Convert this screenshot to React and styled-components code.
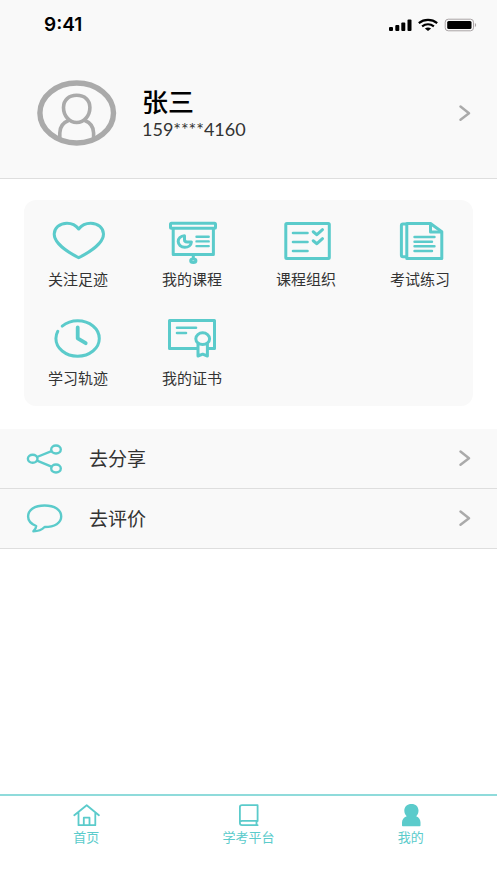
import React from 'react'
import styled, { createGlobalStyle } from 'styled-components'

const TEAL = '#5bcbcb'
const GREY = '#aaaaaa'

const GlobalStyle = createGlobalStyle`
  * {
    box-sizing: border-box;
  }
  body {
    margin: 0;
    background: #fff;
    color: #333;
    font-family: "Noto Sans CJK SC", sans-serif;
  }
  a {
    color: inherit;
    text-decoration: none;
  }
  svg {
    display: block;
    flex: none;
  }
`

const Page = styled.div`
  min-height: 100vh;
  display: flex;
  flex-direction: column;
`

const Header = styled.header`
  background: #f9f9f9;
  border-bottom: 1px solid #dedede;
`

const StatusBar = styled.div`
  height: 50px;
  padding: 0 20px 0 44px;
  display: flex;
  align-items: center;
  justify-content: space-between;
`

const Time = styled.span`
  font-family: Inter, sans-serif;
  font-size: 19px;
  font-weight: 600;
  line-height: 28px;
  color: #000;
`

const Indicators = styled.div`
  display: flex;
  align-items: center;
  gap: 6px;
`

const Profile = styled.a`
  display: flex;
  align-items: center;
  padding: 30px 26px 32px 37px;
`

const ProfileText = styled.div`
  flex: 1;
  margin-left: 25px;
  padding-top: 2px;
`

const Name = styled.div`
  font-size: 26px;
  font-weight: 500;
  line-height: 30px;
  color: #000;
`

const Phone = styled.div`
  font-family: Lato, sans-serif;
  font-size: 18px;
  line-height: 26px;
`

const Main = styled.main`
  flex: 1;
`

const Card = styled.nav`
  margin: 21px 24px 23px;
  padding: 20px 21px 17px 22px;
  display: grid;
  grid-template-columns: repeat(4, 64px);
  justify-content: space-between;
  row-gap: 29px;
  background: #f9f9f9;
  border-radius: 12px;
`

const CardItem = styled.a`
  display: flex;
  flex-direction: column;
  align-items: center;
  gap: 4px;
  font-size: 15px;
  line-height: 22px;
  white-space: nowrap;
`

const Row = styled.a`
  height: 60px;
  padding: 0 26px 1px;
  display: flex;
  align-items: center;
  background: #f9f9f9;
  border-bottom: 1px solid #dedede;
`

const RowLabel = styled.span`
  flex: 1;
  margin-left: 25px;
  font-size: 19px;
  line-height: 28px;
`

const TabBar = styled.nav`
  height: 89px;
  padding: 7px 5px 0;
  display: flex;
  background: #fff;
  border-top: 2px solid #8fdbdb;
`

const Tab = styled.a`
  flex: 1;
  display: flex;
  flex-direction: column;
  align-items: center;
  gap: 2px;
  font-size: 13px;
  line-height: 16px;
  && {
    color: ${TEAL};
  }
`

const LineIcon = styled.svg.attrs({ 'aria-hidden': true })`
  fill: none;
  stroke: ${({ $color }) => $color || TEAL};
  stroke-width: ${({ $weight }) => $weight || 3};
  stroke-linecap: round;
  stroke-linejoin: round;
`

const CardIcon = ({ children }) => (
  <LineIcon width="56" height="44" viewBox="0 0 56 44">
    {children}
  </LineIcon>
)

const RowIcon = ({ children }) => (
  <LineIcon width="38" height="31" viewBox="0 0 38 31" $weight={2.4}>
    {children}
  </LineIcon>
)

const TabIcon = ({ children }) => (
  <LineIcon width="28" height="24" viewBox="0 0 28 24" $weight={1.8}>
    {children}
  </LineIcon>
)

const Chevron = () => (
  <LineIcon width="12" height="18" viewBox="0 0 12 18" $color={GREY} $weight={2.4}>
    <path d="M1.5 2.5 10 9.2l-8.500 6.600" />
  </LineIcon>
)

const Avatar = () => (
  <LineIcon width="80" height="66" viewBox="0 0 80 66" $color={GREY} $weight={3.6}>
    <ellipse cx="39.7" cy="33" rx="36.8" ry="30" strokeWidth="5.4" />
    <path d="M39.7 15.300c-7.800 0-13.200 4.600-13.200 12.200 0 8 5.600 15 13.200 15s13.200-7 13.200-15c0-7.600-5.400-12.200-13.200-12.200z" />
    <path d="M31.500 40.500c-5.500 2.200-8.700 6.500-8.700 12.500v5M47.900 40.500c5.500 2.200 8.700 6.500 8.700 12.500v5" />
  </LineIcon>
)

const Signal = () => (
  <svg width="24" height="14" viewBox="0 0 24 14" aria-hidden="true">
    <rect x="1" y="9" width="4" height="4" rx="1" />
    <rect x="7.3" y="7" width="4" height="6" rx="1" />
    <rect x="13.3" y="4.5" width="4" height="8.5" rx="1" />
    <rect x="19.5" y="1.5" width="4" height="11.5" rx="1" />
  </svg>
)

const Wifi = () => (
  <svg width="20" height="14" viewBox="0 0 20 14" fill="none" stroke="#000" aria-hidden="true">
    <path strokeWidth="2.2" d="M.8 5.100C6.200.9 13.800.9 19.200 5.100" />
    <path strokeWidth="2.2" d="M4.100 8.300c3.500-2.600 8.300-2.600 11.800 0" />
    <path fill="#000" stroke="none" d="M6.900 10.500c1.800-1.300 4.400-1.300 6.200 0L10 13z" />
  </svg>
)

const Battery = () => (
  <svg width="33" height="14" viewBox="0 0 33 14" aria-hidden="true">
    <rect x="1.2" y="1.2" width="28.3" height="11.6" rx="3" fill="none" stroke="#aaa4a6" />
    <rect x="3.2" y="3" width="24.3" height="8" rx="1.5" />
    <path fill="#aaa4a6" d="M30.900 5c1.600.5 1.600 3.500 0 4z" />
  </svg>
)

const menu = [
  {
    label: '关注足迹',
    icon: (
      <path d="M28.700 9C25.500 4.800 21.500 3.200 17 3.200 9.500 3.200 4.200 8.200 4.200 14c0 8.500 12 17.500 24.500 23.700C41.200 31.500 53.500 22.500 53.500 14c0-5.800-5.300-10.800-12.800-10.800-4.700 0-8.800 1.600-12 5.800z" />
    ),
  },
  {
    label: '我的课程',
    icon: (
      <>
        <rect x="6.500" y="3.300" width="45" height="5" rx="1" />
        <path d="M9.200 9v25.500h40.200V9" />
        <path d="M29.300 35v3" />
        <ellipse cx="29.300" cy="40.700" rx="2.600" ry="1.800" />
        <path d="M20.500 15.800c-4 .2-6.300 2.700-6.300 5.700 0 3.200 2.800 5.800 6.600 5.800 3.600 0 6.400-2.100 6.600-5.300h-4.200c-1.600 0-2.700-.9-2.700-2.300z" />
        <path strokeWidth="2.4" d="M32.500 16.700h12.200M32.500 21.400h12.200M32.500 26.100h12.200" />
      </>
    ),
  },
  {
    label: '课程组织',
    icon: (
      <>
        <rect x="7.800" y="3.500" width="43.500" height="35" rx="1" />
        <path strokeWidth="2.6" d="M15 13h14.500M15 22h14.500M15 31h14.500" />
        <path d="m35.200 11.800 3.700 2.900 5.600-5M35.200 20.800l3.700 2.900 5.600-5" />
      </>
    ),
  },
  {
    label: '考试练习',
    icon: (
      <>
        <path d="M38.500 3.500H14.800v35h35V11.800z" />
        <path d="M14 4h-3c-1 0-1.600.7-1.600 1.500v29.700c0 .8.600 1.500 1.600 1.500h3M38.500 4v8h11" />
        <path strokeWidth="2.4" d="M22.500 17h20M22.500 21.700H40M22.500 26.300h20M22.500 31H40" />
      </>
    ),
  },
  {
    label: '学习轨迹',
    icon: (
      <>
        <path d="M12.200 7.100C16.500 3.700 21.800 1.800 27.600 1.800c12.100 0 21.700 7.900 21.700 17.700s-9.600 17.700-21.700 17.700S5.900 29.300 5.900 19.500c0-2.700.7-5 1.900-7.200" />
        <path strokeWidth="3.8" d="M27.700 8.500v10.800l8 4.900" />
      </>
    ),
  },
  {
    label: '我的证书',
    icon: (
      <>
        <path d="M33.500 29.500h-28v-28h45v28h-6" />
        <path strokeWidth="2.6" d="M13 8.700h19M13 14h9" />
        <ellipse cx="38.700" cy="19.700" rx="6.900" ry="5.900" />
        <path d="M34 25v12l4.700-1.800 4.700 1.800V25" />
      </>
    ),
  },
]

const actions = [
  {
    label: '去分享',
    icon: (
      <>
        <ellipse cx="6.700" cy="15.800" rx="4.800" ry="4" />
        <ellipse cx="30" cy="6.500" rx="4.800" ry="4" />
        <ellipse cx="30" cy="25.500" rx="4.800" ry="4" />
        <path d="m11 14 14.500-5.800M11 17.700l14.500 6" />
      </>
    ),
  },
  {
    label: '去评价',
    icon: (
      <path d="M10.200 23C5 21 2.100 17.700 2.100 13.500 2.100 7 8.500 2.500 18.600 2.500s16.600 4.500 16.600 11S28.700 24 18.600 24c-2.600 2.600-6.600 4.200-11.200 4.300 1.700-1.400 2.700-3.200 2.800-5.300z" />
    ),
  },
]

const tabs = [
  {
    label: '首页',
    icon: (
      <path d="M2.300 12.300 14.700 2.200l12.200 10.100M6.500 9.500v12.700h16.800V9.500M11.800 22v-7.300h5.700V22" />
    ),
  },
  {
    label: '学考平台',
    icon: (
      <path d="M23.600 18V2.200H8C6.700 2.200 5.900 3 5.900 4.100v16c0 1.200.8 2.100 2.100 2.100h15.600M6.200 18.500c.5-.5 1-.6 1.800-.6h15.600M22.500 18v4" />
    ),
  },
  {
    label: '我的',
    icon: (
      <path
        fill={TEAL}
        stroke="none"
        d="M14.500 1c4.200 0 7 2.700 7 6.500 0 2.300-.8 4.400-2.300 5.800 2.800 1.200 4.300 3.300 4.300 6.100v3.100c0 .5-.3.800-.8.800H5.800c-.5 0-.8-.3-.8-.8v-3.100c0-2.800 1.700-4.900 4.700-6.100-1.500-1.400-2.400-3.500-2.400-5.800C7.300 3.700 10.300 1 14.500 1z"
      />
    ),
  },
]

export default function App() {
  return (
    <Page>
      <GlobalStyle />
      <Header>
        <StatusBar>
          <Time>9:41</Time>
          <Indicators>
            <Signal />
            <Wifi />
            <Battery />
          </Indicators>
        </StatusBar>
        <Profile href="#profile">
          <Avatar />
          <ProfileText>
            <Name>张三</Name>
            <Phone>159****4160</Phone>
          </ProfileText>
          <Chevron />
        </Profile>
      </Header>
      <Main>
        <Card>
          {menu.map(({ label, icon }) => (
            <CardItem key={label} href="#menu">
              <CardIcon>{icon}</CardIcon>
              {label}
            </CardItem>
          ))}
        </Card>
        {actions.map(({ label, icon }) => (
          <Row key={label} href="#action">
            <RowIcon>{icon}</RowIcon>
            <RowLabel>{label}</RowLabel>
            <Chevron />
          </Row>
        ))}
      </Main>
      <TabBar>
        {tabs.map(({ label, icon }) => (
          <Tab key={label} href="#tab">
            <TabIcon>{icon}</TabIcon>
            {label}
          </Tab>
        ))}
      </TabBar>
    </Page>
  )
}
